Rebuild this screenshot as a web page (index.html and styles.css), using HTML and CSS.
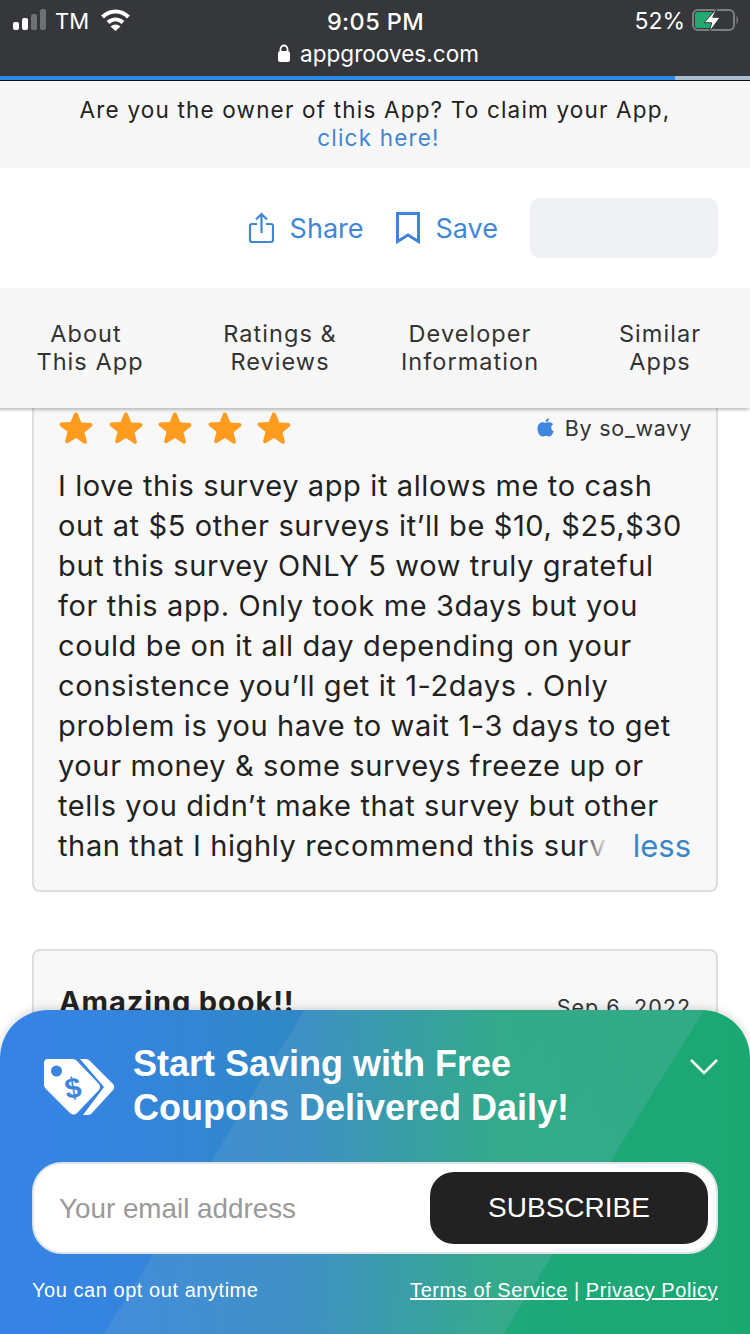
FILE: index.html
```html
<!DOCTYPE html>
<html lang="en">
<head>
<meta charset="utf-8">
<title>AppGrooves</title>
<link rel="stylesheet" href="styles.css">
</head>
<body>
<div class="phone">
  <header class="chrome">
    <div class="status">
      <div class="status-left">
        <svg class="signal" width="33" height="24" viewBox="0 0 33 24"><rect x="0" y="13" width="6" height="8" rx="2" fill="#fff"/><rect x="9" y="9" width="6" height="12" rx="2" fill="#fff"/><rect x="18" y="5" width="6" height="16" rx="2" fill="#707173"/><rect x="27" y="0" width="6" height="21" rx="2" fill="#707173"/></svg>
        <span class="carrier">TM</span>
        <svg class="wifi" width="30" height="24" viewBox="0 0 30 24"><path d="M1.500 8C9 .5 20 .5 27.500 8" fill="none" stroke="#fff" stroke-width="4"/><path d="M7 13.500C11.500 9.500 17.500 9.500 22 13.500" fill="none" stroke="#fff" stroke-width="4"/><path d="M9.500 17.500Q14.500 13.500 19.500 17.500L14.500 22Z" fill="#fff"/></svg>
      </div>
      <div class="clock">9:05 PM</div>
      <div class="status-right">
        <span class="percent">52%</span>
        <svg class="battery" width="48" height="26" viewBox="0 0 48 26"><rect x="3" y="2" width="41" height="20" rx="5" fill="none" stroke="#7d7e80" stroke-width="2"/><rect x="5" y="4" width="19" height="16" rx="2.500" fill="#22a96f"/><path d="M46.500 8c2 1 2 7 0 8z" fill="#7d7e80"/><path d="M27.300 0 14 14.700h7.700L19.300 24 30 9.300h-7.300z" fill="#fff" stroke="#36373a" stroke-width="1"/></svg>
      </div>
    </div>
    <div class="address">
      <svg class="lock" width="14" height="18" viewBox="0 0 14 18"><path d="M3.500 8V5a3.500 3.500 0 0 1 7 0v3" fill="none" stroke="#fff" stroke-width="1.800"/><rect x="1" y="7" width="12" height="11" rx="2.500" fill="#fff"/></svg>
      <span>appgrooves.com</span>
    </div>
  </header>
  <div class="progress"><div class="progress-fill"></div></div>
  <div class="claim">
    <div>Are you the owner of this App? To claim your App,</div>
    <a class="link" href="#">click here!</a>
  </div>
  <div class="actions">
    <a class="action" href="#">
      <svg width="26" height="32" viewBox="0 0 26 32" fill="none" stroke="#3f86d8" stroke-width="2.200"><path d="M9 12H4a2 2 0 0 0-2 2v14a2 2 0 0 0 2 2h19a2 2 0 0 0 2-2V14a2 2 0 0 0-2-2h-5"/><path d="M13.500 21V2M8 7.500 13.500 2 19 7.500"/></svg>
      <span>Share</span>
    </a>
    <a class="action" href="#">
      <svg width="24" height="32" viewBox="0 0 24 32" fill="none" stroke="#3f86d8" stroke-width="3"><path d="M1.500 1.500h21v28L12 23 1.500 29.500z"/></svg>
      <span>Save</span>
    </a>
    <div class="placeholder"></div>
  </div>
  <nav class="tabs">
    <a class="tab" href="#"><span class="tab-offset">About</span><br>This App</a>
    <a class="tab" href="#">Ratings &amp;<br>Reviews</a>
    <a class="tab" href="#">Developer<br>Information</a>
    <a class="tab" href="#">Similar<br>Apps</a>
  </nav>
  <main class="reviews">
    <article class="card card-first">
      <div class="card-meta">
        <div class="stars">
          <svg class="star" viewBox="0 0 36 36"><path d="M18 1.500a2 2 0 0 1 1.900 1.300l3.700 9.300 10 .7c1.800.1 2.500 2.300 1.100 3.500l-7.700 6.400 2.500 9.700c.4 1.700-1.500 3.100-3 2.100L18 28.500l-8.500 5.300c-1.500 1-3.400-.4-3-2.100L9 22 1.300 15.800C-.1 14.600.6 12.400 2.400 12.300l10-.7 3.700-9.300A2 2 0 0 1 18 1.500z"/></svg>
          <svg class="star" viewBox="0 0 36 36"><path d="M18 1.500a2 2 0 0 1 1.900 1.300l3.700 9.300 10 .7c1.800.1 2.500 2.300 1.100 3.500l-7.700 6.400 2.500 9.700c.4 1.700-1.500 3.100-3 2.100L18 28.500l-8.500 5.300c-1.500 1-3.400-.4-3-2.100L9 22 1.300 15.800C-.1 14.600.6 12.400 2.400 12.300l10-.7 3.700-9.300A2 2 0 0 1 18 1.500z"/></svg>
          <svg class="star" viewBox="0 0 36 36"><path d="M18 1.500a2 2 0 0 1 1.900 1.300l3.700 9.300 10 .7c1.800.1 2.500 2.300 1.100 3.500l-7.700 6.400 2.500 9.700c.4 1.700-1.500 3.100-3 2.100L18 28.500l-8.500 5.300c-1.500 1-3.400-.4-3-2.100L9 22 1.300 15.800C-.1 14.600.6 12.400 2.400 12.300l10-.7 3.700-9.300A2 2 0 0 1 18 1.500z"/></svg>
          <svg class="star" viewBox="0 0 36 36"><path d="M18 1.500a2 2 0 0 1 1.900 1.300l3.700 9.300 10 .7c1.800.1 2.500 2.300 1.100 3.500l-7.700 6.400 2.500 9.700c.4 1.700-1.500 3.100-3 2.100L18 28.500l-8.500 5.300c-1.500 1-3.400-.4-3-2.100L9 22 1.300 15.800C-.1 14.600.6 12.400 2.400 12.300l10-.7 3.700-9.300A2 2 0 0 1 18 1.500z"/></svg>
          <svg class="star" viewBox="0 0 36 36"><path d="M18 1.500a2 2 0 0 1 1.900 1.300l3.700 9.300 10 .7c1.800.1 2.500 2.300 1.100 3.500l-7.700 6.400 2.500 9.700c.4 1.700-1.500 3.100-3 2.100L18 28.500l-8.500 5.300c-1.500 1-3.400-.4-3-2.100L9 22 1.300 15.800C-.1 14.600.6 12.400 2.400 12.300l10-.7 3.700-9.300A2 2 0 0 1 18 1.500z"/></svg>
        </div>
        <div class="author">
          <svg width="17" height="20" viewBox="0 0 17 20" fill="#3f86e0"><path d="M8.500 5C10 5 11 4.300 12.300 4.300c1.700 0 3 .8 3.800 2-2.800 1.700-2.400 5.700.6 7-.7 2-2.300 5.200-4.200 5.200-1.200 0-1.900-.8-3.500-.8s-2.500.8-3.600.8C2.900 18.500.5 14.500.5 10.700c0-4 2.500-6.400 5-6.400C6.800 4.300 7.500 5 8.500 5z"/><path d="M8.500 4.300C8.300 2.300 10 .4 12 .2c.2 2.200-1.500 4.200-3.500 4.100z"/></svg>
          <span>By so_wavy</span>
        </div>
      </div>
      <div class="body-wrap">
        <p class="body">I love this survey app it allows me to cash<br>out at $5 other surveys it’ll be $10, $25,$30<br>but this survey ONLY 5 wow truly grateful<br>for this app. Only took me 3days but you<br>could be on it all day depending on your<br>consistence you’ll get it 1-2days . Only<br>problem is you have to wait 1-3 days to get<br>your money &amp; some surveys freeze up or<br>tells you didn’t make that survey but other<br>than that I highly recommend this surv</p>
        <a class="less" href="#">less</a>
      </div>
    </article>
    <article class="card card-second">
      <div class="card-head">
        <h3 class="card-title">Amazing book!!</h3>
        <span class="date">Sep 6, 2022</span>
      </div>
    </article>
  </main>
  <aside class="promo">
    <div class="promo-top">
      <svg class="tag" width="72" height="58" viewBox="0 0 72 58"><path d="M4 0H29Q31 0 33 2L55 25Q57 28 55 31L33 54Q30 57 26 54L2 30Q0 28 0 26V4Q0 0 4 0Z" fill="#fff"/><circle cx="12.500" cy="12" r="5.500" fill="#3a84dd"/><text class="tag-sign" x="29" y="39" text-anchor="middle" transform="rotate(-10 29 29)">$</text><path d="M36 0H42Q44 0 45.500 1.500L69.500 25.500Q71 28 69.500 30.500L47.500 54.500Q46 56 44 56H39L60 28Z" fill="#fff"/></svg>
      <h2 class="promo-title">Start Saving with Free<br>Coupons Delivered Daily!</h2>
      <svg class="chevron" width="30" height="18" viewBox="0 0 30 18" fill="none" stroke="#fff" stroke-width="2.600"><path d="M2 2l13 13L28 2"/></svg>
    </div>
    <div class="subscribe">
      <span class="email">Your email address</span>
      <button class="button" type="button">SUBSCRIBE</button>
    </div>
    <div class="promo-foot">
      <span>You can opt out anytime</span>
      <span><a href="#">Terms of Service</a> | <a href="#">Privacy Policy</a></span>
    </div>
  </aside>
</div>
</body>
</html>
```
FILE: styles.css
```css
* { box-sizing: border-box; }
html, body { margin: 0; padding: 0; }
body { background: #fff; font-family: Inter, "Liberation Sans", sans-serif; color: #222; }
a { color: inherit; text-decoration: none; }
.phone { position: relative; width: 750px; height: 1334px; overflow: hidden; display: flex; flex-direction: column; }

.chrome { height: 76px; background: #36373a; color: #fff; flex: none; font-family: Inter, sans-serif; }
.status { height: 38px; padding: 4px 12px 0 13px; display: grid; grid-template-columns: 1fr auto 1fr; align-items: center; }
.status-left { display: flex; align-items: center; gap: 9px; }
.carrier { font-size: 22px; }
.wifi { margin-left: 3px; }
.clock { font-size: 23.500px; font-weight: 500; letter-spacing: .4px; }
.status-right { display: flex; justify-content: flex-end; align-items: center; gap: 5px; }
.percent { font-size: 23px; }
.address { height: 30px; display: flex; justify-content: center; align-items: center; gap: 9px; font-size: 22.500px; padding-left: 6px; letter-spacing: .05px; }
.progress { height: 5px; background: #a9bdd0; border-bottom: 1px solid #111; flex: none; }
.progress-fill { width: 675px; height: 4px; background: #2b8ae4; }

.claim { height: 87px; flex: none; background: #f7f7f7; padding-top: 15px; text-align: center; font-size: 22.500px; line-height: 28px; letter-spacing: 1.18px; color: #222; }
.link { display: inline-block; padding-left: 7px; color: #3f86d8; }

.actions { height: 120px; flex: none; background: #fff; display: flex; align-items: center; justify-content: flex-end; padding-right: 32px; }
.action { display: flex; align-items: center; gap: 16px; color: #3f86d8; font-size: 27px; margin-right: 32px; }
.action svg { flex: none; }
.placeholder { width: 188px; height: 60px; background: #f0f1f4; border-radius: 10px; }

.tabs { position: relative; z-index: 2; height: 120px; flex: none; margin-left: -5px; background: #f7f7f7; box-shadow: 0 3px 3px -1px rgba(0,0,0,.25); display: grid; grid-template-columns: repeat(4, 190px); align-items: center; text-align: center; font-size: 23.500px; line-height: 28px; letter-spacing: 1.05px; color: #333; }
.tab-offset { display: inline-block; padding-right: 8px; }

.reviews { flex: 1; min-height: 0; padding: 0 32px; overflow: hidden; }
.card { background: #f8f8f8; border: 2px solid #dedede; padding: 0 24px; }
.card-first { height: 484px; border-top: 0; border-radius: 0 0 8px 8px; }
.card-second { height: 200px; margin-top: 57px; border-radius: 8px 8px 0 0; }
.card-meta { height: 40px; display: flex; justify-content: space-between; align-items: center; }
.stars { display: flex; gap: 13.600px; }
.star { width: 36px; height: 34px; fill: #ff9b1f; }
.author { display: flex; align-items: center; gap: 11px; font-size: 21.500px; letter-spacing: .75px; color: #333; }
.body-wrap { position: relative; margin-top: 18px; }
.body { margin: 0; font-size: 29px; line-height: 40px; letter-spacing: .62px; white-space: nowrap; color: #222; }
.less { position: absolute; right: 1px; bottom: 0; padding-left: 52px; font-size: 31px; line-height: 40px; color: #3a87c8; background: linear-gradient(to right, rgba(248,248,248,0), #f8f8f8 28px); }
.card-head { display: flex; justify-content: space-between; align-items: flex-end; padding-top: 31px; padding-right: 1px; }
.card-title { margin: 0 0 0 1px; font-size: 29px; font-weight: 700; line-height: 40px; letter-spacing: .9px; }
.date { font-size: 21.500px; letter-spacing: 1px; color: #333; margin-bottom: 2px; }

.promo { position: absolute; left: 0; right: 0; bottom: 0; height: 324px; z-index: 3; color: #fff; border-radius: 48px 48px 0 0; padding: 32px 32px 0; font-family: "Liberation Sans", Arial, sans-serif;
  background:
    linear-gradient(121.800deg, rgba(130,180,200,0) 32%, rgba(130,180,200,.18) 32.100%, rgba(130,180,200,.22) 74%, rgba(130,180,200,0) 74.100%),
    linear-gradient(90deg, #3683e6 0%, #3584e0 14%, #2f88c5 40%, #1fa87a 67%, #1aa872 100%);
  box-shadow: 0 -2px 8px rgba(0,0,0,.15);
}
.promo-top { position: relative; display: flex; align-items: flex-start; }
.tag { margin: 17px 0 0 12px; flex: none; }
.tag-sign { font: 700 29px "Liberation Sans", sans-serif; fill: #3a84dd; }
.promo-title { margin: 0 0 0 17px; font-size: 36px; line-height: 44px; font-weight: 700; }
.chevron { position: absolute; right: -1px; top: 16px; }
.subscribe { height: 92px; margin-top: 32px; background: #fff; border: 2px solid #dfe3e6; border-radius: 30px; padding: 8px; display: flex; justify-content: space-between; align-items: center; }
.email { margin-left: 17px; margin-top: 2px; font-size: 27.800px; color: #9a9a9a; }
.button { width: 278px; height: 72px; border: 0; background: #222; color: #fff; border-radius: 24px; font: 400 28px "Liberation Sans", sans-serif; }
.promo-foot { margin-top: 22px; display: flex; justify-content: space-between; font-size: 20px; line-height: 28px; letter-spacing: .55px; }
.promo-foot a { text-decoration: underline; }
```
